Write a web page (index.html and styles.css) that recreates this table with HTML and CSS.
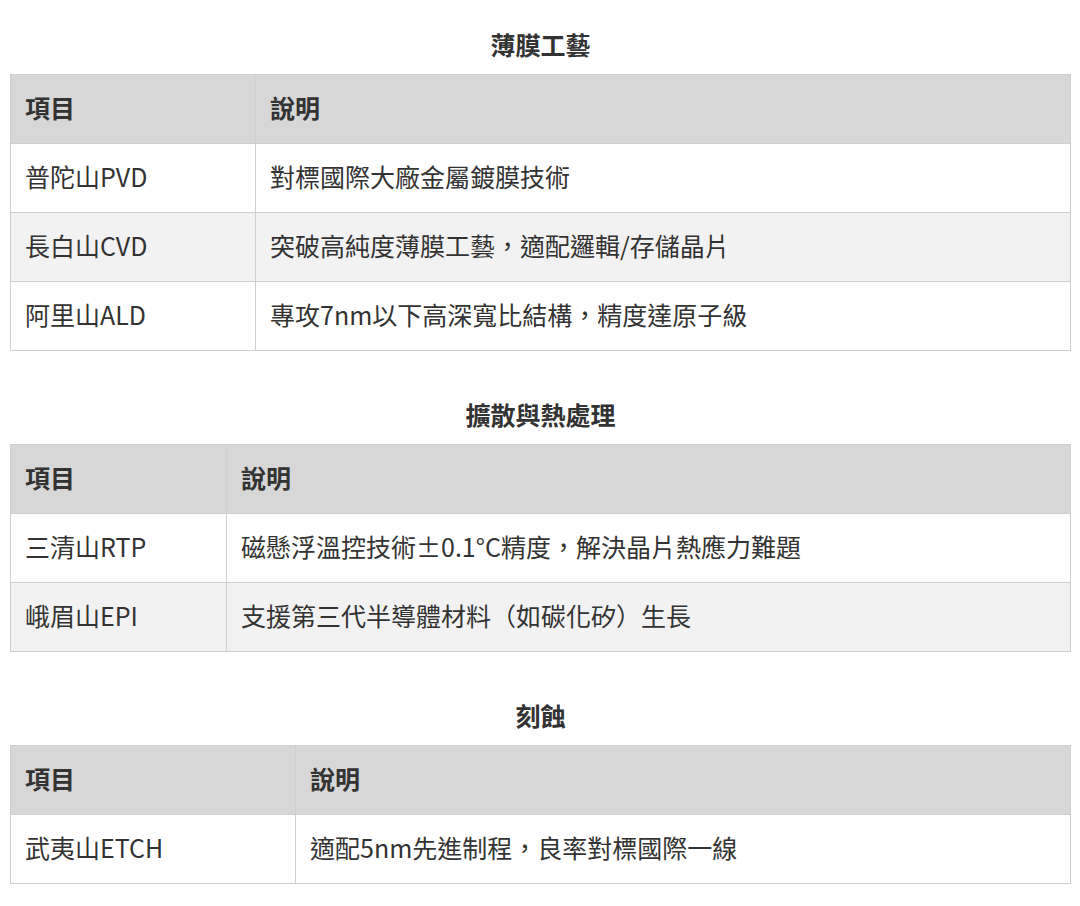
FILE: index.html
```html
<!DOCTYPE html>
<html lang="zh-Hant">
<head>
<meta charset="utf-8">
<title>工藝</title>
<link rel="stylesheet" href="styles.css">
</head>
<body>
<main class="page">
  <section class="block">
    <table class="grid grid-1">
      <caption class="title">薄膜工藝</caption>
      <colgroup><col class="c1"><col></colgroup>
      <thead><tr><th>項目</th><th>說明</th></tr></thead>
      <tbody>
        <tr><td>普陀山PVD</td><td>對標國際大廠金屬鍍膜技術</td></tr>
        <tr><td>長白山CVD</td><td>突破高純度薄膜工藝，適配邏輯/存儲晶片</td></tr>
        <tr><td>阿里山ALD</td><td>專攻7nm以下高深寬比結構，精度達原子級</td></tr>
      </tbody>
    </table>
  </section>
  <section class="block">
    <table class="grid grid-2">
      <caption class="title">擴散與熱處理</caption>
      <colgroup><col class="c1"><col></colgroup>
      <thead><tr><th>項目</th><th>說明</th></tr></thead>
      <tbody>
        <tr><td>三清山RTP</td><td>磁懸浮溫控技術±0.1°C精度，解決晶片熱應力難題</td></tr>
        <tr><td>峨眉山EPI</td><td>支援第三代半導體材料（如碳化矽）生長</td></tr>
      </tbody>
    </table>
  </section>
  <section class="block">
    <table class="grid grid-3">
      <caption class="title">刻蝕</caption>
      <colgroup><col class="c1"><col></colgroup>
      <thead><tr><th>項目</th><th>說明</th></tr></thead>
      <tbody>
        <tr><td>武夷山ETCH</td><td>適配5nm先進制程，良率對標國際一線</td></tr>
      </tbody>
    </table>
  </section>
</main>
</body>
</html>
```
FILE: styles.css
```css
html, body {
  margin: 0;
  padding: 0;
  background: #ffffff;
}

body {
  font-family: "Noto Sans CJK TC", "Noto Sans CJK SC", "Noto Sans", sans-serif;
  color: #333333;
  font-size: 25px;
}

.page {
  padding: 26px 9px 0 10px;
  display: flex;
  flex-direction: column;
  gap: 45px;
}

.grid {
  width: 100%;
  border-collapse: collapse;
  table-layout: fixed;
}

.title {
  font-weight: 700;
  font-size: 25px;
  line-height: 36px;
  padding-bottom: 12px;
  text-align: center;
  color: #333333;
}

.grid th,
.grid td {
  border: 1px solid #cfcfcf;
  padding: 14px 13px 18px 14px;
  line-height: 36px;
  text-align: left;
  vertical-align: middle;
  white-space: nowrap;
}

.grid th {
  background: #d7d7d7;
  font-weight: 700;
}

.grid tbody tr:nth-child(even) td {
  background: #f2f2f2;
}

.grid-1 .c1 { width: 245px; }
.grid-2 .c1 { width: 216px; }
.grid-3 .c1 { width: 285px; }
```
